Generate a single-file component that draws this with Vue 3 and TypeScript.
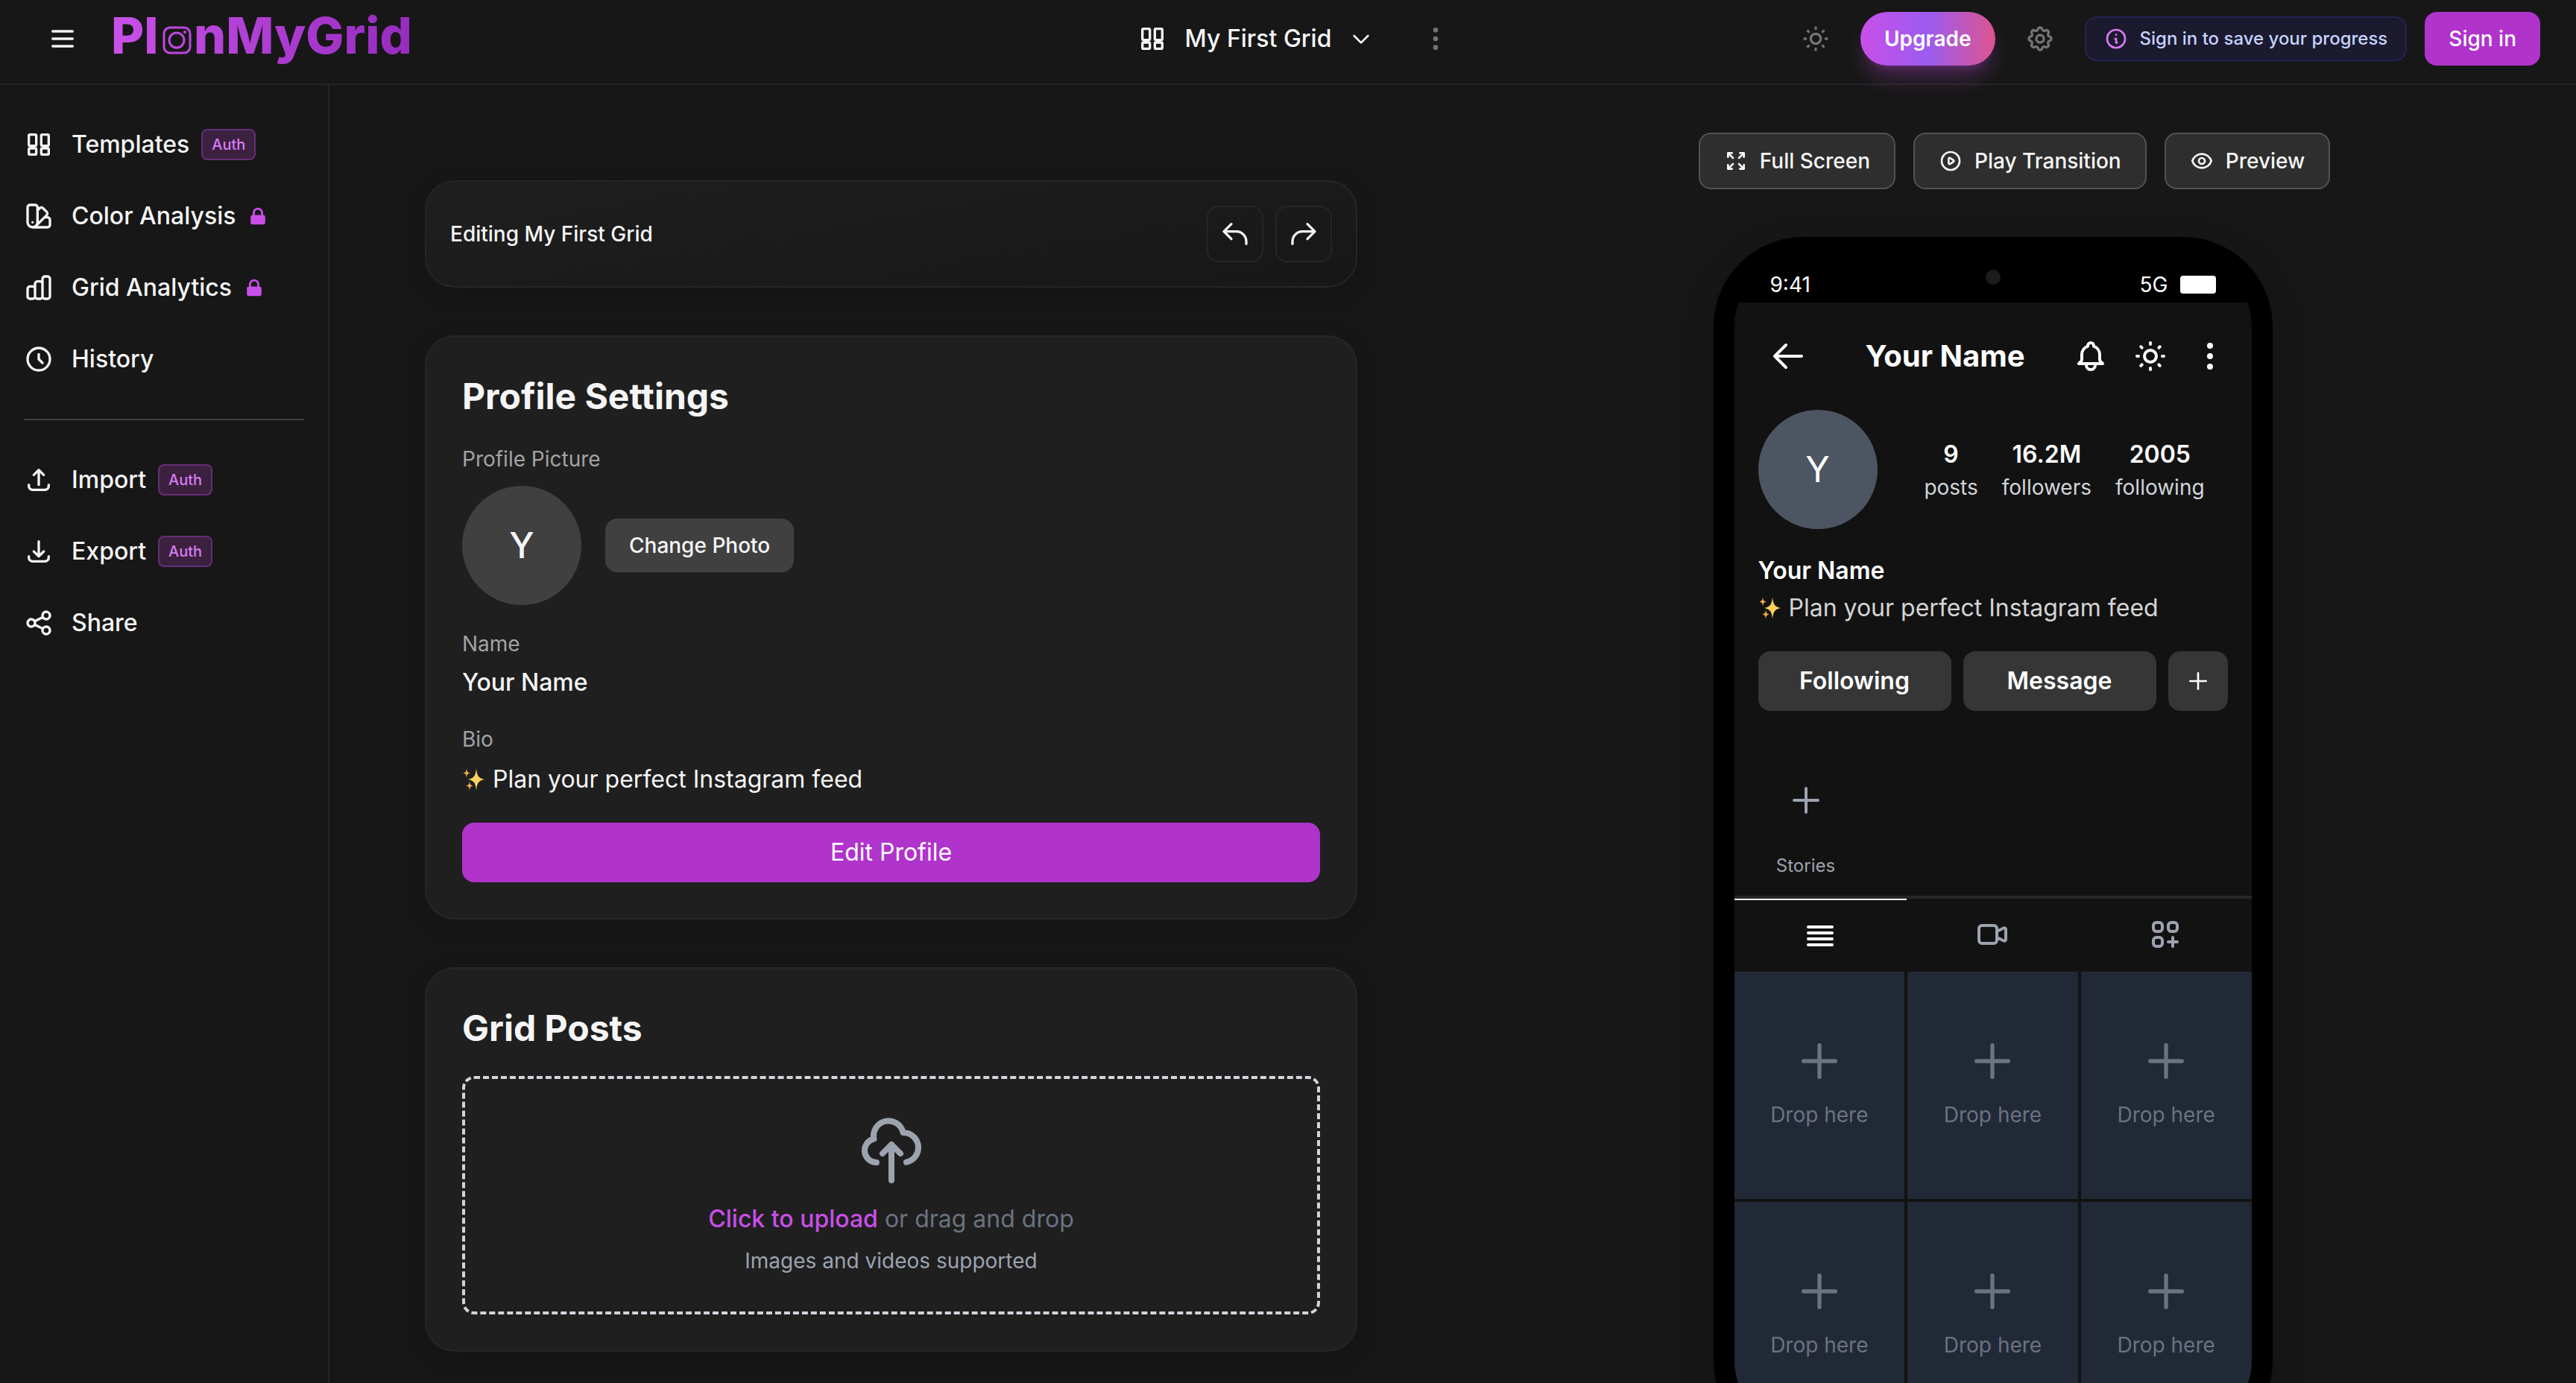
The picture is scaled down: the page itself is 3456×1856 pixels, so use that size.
<script setup lang="ts">
import { h, type FunctionalComponent } from 'vue'

type IconName =
  | 'menu' | 'template' | 'chevron' | 'dots' | 'sun' | 'cog' | 'info' | 'swatch' | 'chart'
  | 'clock' | 'upload' | 'download' | 'share' | 'undo' | 'redo' | 'cloud' | 'expand' | 'play'
  | 'eye' | 'back' | 'bell' | 'plus' | 'list' | 'video' | 'gridAdd'

const paths: Record<IconName, string> = {
  menu: 'M4 6h16M4 12h16M4 18h16',
  template:
    'M4 5a1 1 0 011-1h4a1 1 0 011 1v7a1 1 0 01-1 1H5a1 1 0 01-1-1V5zM14 5a1 1 0 011-1h4a1 1 0 011 1v7a1 1 0 01-1 1h-4a1 1 0 01-1-1V5zM4 16a1 1 0 011-1h4a1 1 0 011 1v3a1 1 0 01-1 1H5a1 1 0 01-1-1v-3zM14 16a1 1 0 011-1h4a1 1 0 011 1v3a1 1 0 01-1 1h-4a1 1 0 01-1-1v-3z',
  chevron: 'M19 9l-7 7-7-7',
  dots: 'M12 5v.01M12 12v.01M12 19v.01M12 6a1 1 0 110-2 1 1 0 010 2zm0 7a1 1 0 110-2 1 1 0 010 2zm0 7a1 1 0 110-2 1 1 0 010 2z',
  sun: 'M12 3v1m0 16v1m9-9h-1M4 12H3m15.364 6.364l-.707-.707M6.343 6.343l-.707-.707m12.728 0l-.707.707M6.343 17.657l-.707.707M16 12a4 4 0 11-8 0 4 4 0 018 0z',
  cog: 'M10.325 4.317c.426-1.756 2.924-1.756 3.35 0a1.724 1.724 0 002.573 1.066c1.543-.94 3.31.826 2.37 2.37a1.724 1.724 0 001.065 2.572c1.756.426 1.756 2.924 0 3.35a1.724 1.724 0 00-1.066 2.573c.94 1.543-.826 3.31-2.37 2.37a1.724 1.724 0 00-2.572 1.065c-.426 1.756-2.924 1.756-3.35 0a1.724 1.724 0 00-2.573-1.066c-1.543.94-3.31-.826-2.37-2.37a1.724 1.724 0 00-1.065-2.572c-1.756-.426-1.756-2.924 0-3.35a1.724 1.724 0 001.066-2.573c-.94-1.543.826-3.31 2.37-2.37.996.608 2.296.07 2.572-1.065zM15 12a3 3 0 11-6 0 3 3 0 016 0z',
  info: 'M13 16h-1v-4h-1m1-4h.01M21 12a9 9 0 11-18 0 9 9 0 0118 0z',
  swatch:
    'M7 21a4 4 0 01-4-4V5a2 2 0 012-2h4a2 2 0 012 2v12a4 4 0 01-4 4zm0 0h12a2 2 0 002-2v-4a2 2 0 00-2-2h-2.343M11 7.343l1.657-1.657a2 2 0 012.828 0l2.829 2.829a2 2 0 010 2.828l-8.486 8.485M7 17h.01',
  chart:
    'M9 19v-6a2 2 0 00-2-2H5a2 2 0 00-2 2v6a2 2 0 002 2h2a2 2 0 002-2zm0 0V9a2 2 0 012-2h2a2 2 0 012 2v10m-6 0a2 2 0 002 2h2a2 2 0 002-2m0 0V5a2 2 0 012-2h2a2 2 0 012 2v14a2 2 0 01-2 2h-2a2 2 0 01-2-2z',
  clock: 'M12 8v4l3 3m6-3a9 9 0 11-18 0 9 9 0 0118 0z',
  upload: 'M4 16v1a3 3 0 003 3h10a3 3 0 003-3v-1m-4-8l-4-4m0 0L8 8m4-4v12',
  download: 'M4 16v1a3 3 0 003 3h10a3 3 0 003-3v-1m-4-4l-4 4m0 0l-4-4m4 4V4',
  share:
    'M8.684 13.342C8.886 12.938 9 12.482 9 12c0-.482-.114-.938-.316-1.342m0 2.684a3 3 0 110-2.684m0 2.684l6.632 3.316m-6.632-6l6.632-3.316m0 0a3 3 0 105.367-2.684 3 3 0 00-5.367 2.684zm0 9.316a3 3 0 105.368 2.684 3 3 0 00-5.368-2.684z',
  undo: 'M3 10h10a8 8 0 018 8v2M3 10l6 6m-6-6l6-6',
  redo: 'M21 10H11a8 8 0 00-8 8v2m18-10l-6 6m6-6l-6-6',
  cloud: 'M7 16a4 4 0 01-.88-7.903A5 5 0 1115.9 6L16 6a5 5 0 011 9.9M15 13l-3-3m0 0l-3 3m3-3v12',
  expand:
    'M4 8V4m0 0h4M4 4l5 5m11-1V4m0 0h-4m4 0l-5 5M4 16v4m0 0h4m-4 0l5-5m11 5l-5-5m5 5v-4m0 4h-4',
  play: 'M14.752 11.168l-3.197-2.132A1 1 0 0010 9.87v4.263a1 1 0 001.555.832l3.197-2.132a1 1 0 000-1.664zM21 12a9 9 0 11-18 0 9 9 0 0118 0z',
  eye: 'M15 12a3 3 0 11-6 0 3 3 0 016 0zM2.458 12C3.732 7.943 7.523 5 12 5c4.478 0 8.268 2.943 9.542 7-1.274 4.057-5.064 7-9.542 7-4.477 0-8.268-2.943-9.542-7z',
  back: 'M10.5 19.5L3 12m0 0l7.5-7.5M3 12h18',
  bell: 'M15 17h5l-1.405-1.405A2.032 2.032 0 0118 14.158V11a6.002 6.002 0 00-4-5.659V5a2 2 0 10-4 0v.341C7.67 6.165 6 8.388 6 11v3.159c0 .538-.214 1.055-.595 1.436L4 17h5m6 0v1a3 3 0 11-6 0v-1m6 0H9',
  plus: 'M12 4v16m8-8H4',
  list: 'M4 6h16M4 10h16M4 14h16M4 18h16',
  video:
    'M15 10l4.553-2.276A1 1 0 0121 8.618v6.764a1 1 0 01-1.447.894L15 14M5 18h8a2 2 0 002-2V8a2 2 0 00-2-2H5a2 2 0 00-2 2v8a2 2 0 002 2z',
  gridAdd:
    'M17 14v6m-3-3h6M6 10h2a2 2 0 002-2V6a2 2 0 00-2-2H6a2 2 0 00-2 2v2a2 2 0 002 2zm10 0h2a2 2 0 002-2V6a2 2 0 00-2-2h-2a2 2 0 00-2 2v2a2 2 0 002 2zM6 20h2a2 2 0 002-2v-2a2 2 0 00-2-2H6a2 2 0 00-2 2v2a2 2 0 002 2z',
}

const Icon: FunctionalComponent<{ name: IconName; size: number }> = (props) =>
  h(
    'svg',
    {
      width: props.size,
      height: props.size,
      viewBox: '0 0 24 24',
      fill: 'none',
      stroke: 'currentColor',
      'stroke-width': 2,
      'stroke-linecap': 'round',
      'stroke-linejoin': 'round',
      'aria-hidden': 'true',
    },
    [h('path', { d: paths[props.name] })],
  )
Icon.props = ['name', 'size']

/* Three four-pointed stars used in front of the bio text. */
const Sparkles: FunctionalComponent = () =>
  h('svg', { width: 32, height: 32, viewBox: '0 0 32 32', fill: '#fbd15c', role: 'img', 'aria-label': 'Sparkles' }, [
    h('path', { d: 'M19 1c1 10 2.500 13 11 15-8.500 2-10 5-11 15-1-10-2.500-13-11-15 8.500-2 10-5 11-15z' }),
    h('path', { d: 'M6 1c.4 4.500 1.200 5.500 4.500 6.500-3.300 1-4.100 2-4.500 6.500-.4-4.500-1.200-5.500-4.500-6.500 3.300-1 4.100-2 4.500-6.500z', fill: '#eeaa4c' }),
    h('path', { d: 'M10 18c.4 4.500 1.200 5.500 4.500 6.500-3.300 1-4.100 2-4.500 6.500-.4-4.500-1.200-5.500-4.500-6.500 3.300-1 4.100-2 4.500-6.500z', fill: '#eeaa4c' }),
  ])

interface NavItem {
  label: string
  icon: IconName
  badge?: 'auth' | 'lock'
}

const navGroups: NavItem[][] = [
  [
    { label: 'Templates', icon: 'template', badge: 'auth' },
    { label: 'Color Analysis', icon: 'swatch', badge: 'lock' },
    { label: 'Grid Analytics', icon: 'chart', badge: 'lock' },
    { label: 'History', icon: 'clock' },
  ],
  [
    { label: 'Import', icon: 'upload', badge: 'auth' },
    { label: 'Export', icon: 'download', badge: 'auth' },
    { label: 'Share', icon: 'share' },
  ],
]

const tools: { label: string; icon: IconName }[] = [
  { label: 'Full Screen', icon: 'expand' },
  { label: 'Play Transition', icon: 'play' },
  { label: 'Preview', icon: 'eye' },
]

const profile = { name: 'Your Name', initial: 'Y', bio: 'Plan your perfect Instagram feed' }

const stats = [
  { value: '9', label: 'posts' },
  { value: '16.2M', label: 'followers' },
  { value: '2005', label: 'following' },
]

const tabs: { label: string; icon: IconName }[] = [
  { label: 'Feed', icon: 'list' },
  { label: 'Reels', icon: 'video' },
  { label: 'Tagged', icon: 'gridAdd' },
]
</script>

<template>
  <div class="app">
    <header class="topbar">
      <div class="topbar-left">
        <button class="icon-btn bright" type="button" aria-label="Toggle menu"><Icon name="menu" :size="40" /></button>
        <a class="logo" href="#" aria-label="PlanMyGrid home">
          <svg width="416" height="96" viewBox="-8 0 416 96">
            <defs>
              <linearGradient id="brand" gradientUnits="userSpaceOnUse" x1="0" y1="0" x2="404" y2="0">
                <stop offset="0" stop-color="#c850e8" />
                <stop offset="1" stop-color="#962bbe" />
              </linearGradient>
            </defs>
            <text class="logo-text" x="-3" y="68" fill="url(#brand)">Pl</text>
            <g fill="none" stroke="url(#brand)" stroke-width="3">
              <rect x="68" y="33" width="35" height="34" rx="8" />
              <circle cx="85" cy="50" r="10" />
            </g>
            <circle cx="96" cy="39" r="2" fill="url(#brand)" />
            <text class="logo-text" x="108" y="68" fill="url(#brand)">nMyGrid</text>
          </svg>
        </a>
      </div>

      <div class="topbar-center">
        <button class="grid-picker" type="button">
          <Icon name="template" :size="40" />
          <span>My First Grid</span>
          <Icon name="chevron" :size="32" />
        </button>
        <button class="icon-btn" type="button" aria-label="Grid options"><Icon name="dots" :size="40" /></button>
      </div>

      <div class="topbar-right">
        <button class="icon-btn" type="button" aria-label="Toggle theme"><Icon name="sun" :size="40" /></button>
        <button class="upgrade" type="button">Upgrade</button>
        <button class="icon-btn" type="button" aria-label="Settings"><Icon name="cog" :size="40" /></button>
        <div class="notice"><Icon name="info" :size="32" /><span>Sign in to save your progress</span></div>
        <button class="primary sign-in" type="button">Sign in</button>
      </div>
    </header>

    <div class="body">
      <aside class="sidebar">
        <nav aria-label="Main">
          <ul v-for="(group, g) in navGroups" :key="g" class="nav-group">
            <li v-for="item in group" :key="item.label">
              <a class="nav-link" href="#">
                <Icon :name="item.icon" :size="40" />
                <span class="nav-label">
                  {{ item.label }}
                  <span v-if="item.badge === 'auth'" class="auth">Auth</span>
                  <svg v-else-if="item.badge === 'lock'" class="lock" width="28" height="28" viewBox="0 0 20 20" aria-hidden="true">
                    <path fill-rule="evenodd" d="M5 9V7a5 5 0 0110 0v2a2 2 0 012 2v5a2 2 0 01-2 2H5a2 2 0 01-2-2v-5a2 2 0 012-2zm8-2v2H7V7a3 3 0 016 0z" />
                  </svg>
                </span>
              </a>
            </li>
          </ul>
        </nav>
      </aside>

      <main class="main">
        <div class="editor">
          <section class="card editing">
            <span>Editing My First Grid</span>
            <div class="history">
              <button type="button" aria-label="Undo"><Icon name="undo" :size="40" /></button>
              <button type="button" aria-label="Redo"><Icon name="redo" :size="40" /></button>
            </div>
          </section>

          <section class="card panel">
            <h2>Profile Settings</h2>
            <div class="fields">
              <div>
                <p class="label">Profile Picture</p>
                <div class="photo-row">
                  <div class="avatar editor-avatar">{{ profile.initial }}</div>
                  <button class="change-photo" type="button">Change Photo</button>
                </div>
              </div>
              <div>
                <p class="label">Name</p>
                <p class="value">{{ profile.name }}</p>
              </div>
              <div>
                <p class="label">Bio</p>
                <p class="bio"><Sparkles />{{ profile.bio }}</p>
              </div>
              <button class="primary edit-profile" type="button">Edit Profile</button>
            </div>
          </section>

          <section class="card panel">
            <h2>Grid Posts</h2>
            <label class="dropzone">
              <input type="file" multiple accept="image/*,video/*" hidden />
              <Icon name="cloud" :size="96" />
              <span class="drop-main"><b>Click to upload</b> or drag and drop</span>
              <span class="drop-sub">Images and videos supported</span>
            </label>
          </section>
        </div>

        <div class="preview">
          <div class="toolbar">
            <button v-for="tool in tools" :key="tool.label" type="button">
              <Icon :name="tool.icon" :size="32" />{{ tool.label }}
            </button>
          </div>

          <div class="phone">
            <span class="camera"></span>
            <div class="screen">
              <div class="status">
                <span>9:41</span>
                <span class="signal">5G<i class="battery"></i></span>
              </div>

              <div class="ig-header">
                <button class="back" type="button" aria-label="Back"><Icon name="back" :size="48" /></button>
                <h3>{{ profile.name }}</h3>
                <div class="ig-actions">
                  <button type="button" aria-label="Notifications"><Icon name="bell" :size="48" /></button>
                  <button type="button" aria-label="Theme"><Icon name="sun" :size="48" /></button>
                  <button type="button" aria-label="More"><Icon name="dots" :size="48" /></button>
                </div>
              </div>

              <div class="ig-profile">
                <div class="ig-top">
                  <div class="avatar ig-avatar">{{ profile.initial }}</div>
                  <div class="stats">
                    <div v-for="stat in stats" :key="stat.label" class="stat">
                      <strong>{{ stat.value }}</strong>
                      <span>{{ stat.label }}</span>
                    </div>
                  </div>
                </div>
                <div class="ig-bio">
                  <strong>{{ profile.name }}</strong>
                  <p class="bio"><Sparkles />{{ profile.bio }}</p>
                </div>
                <div class="ig-buttons">
                  <button type="button">Following</button>
                  <button type="button">Message</button>
                  <button class="square" type="button" aria-label="Add"><Icon name="plus" :size="32" /></button>
                </div>
              </div>

              <div class="stories">
                <button class="story" type="button">
                  <span class="story-ring"><Icon name="plus" :size="48" /></span>
                  Stories
                </button>
              </div>

              <div class="tabs">
                <button
                  v-for="(tab, t) in tabs"
                  :key="tab.label"
                  type="button"
                  :class="{ active: t === 0 }"
                  :aria-label="tab.label"
                >
                  <Icon :name="tab.icon" :size="48" />
                </button>
              </div>

              <div class="posts">
                <div v-for="n in 6" :key="n" class="post">
                  <Icon name="plus" :size="64" />
                  <span>Drop here</span>
                </div>
              </div>
            </div>
          </div>
        </div>
      </main>
    </div>
  </div>
</template>

<style>
body {
  margin: 0;
  background: #171717;
}
</style>

<style scoped>
* {
  box-sizing: border-box;
}

.app {
  display: flex;
  flex-direction: column;
  height: 100vh;
  overflow: hidden;
  background: #171717;
  color: #f5f5f5;
  font-family: Inter, "Noto Sans", sans-serif;
  font-size: 32px;
  line-height: 48px;
}

h2,
h3,
p,
ul {
  margin: 0;
  padding: 0;
}

svg {
  display: block;
  flex: none;
}

button {
  display: flex;
  align-items: center;
  justify-content: center;
  margin: 0;
  padding: 0;
  border: 0;
  background: none;
  color: inherit;
  font: inherit;
  white-space: nowrap;
}

a {
  color: inherit;
  text-decoration: none;
}

/* Top bar */
.topbar {
  display: grid;
  grid-template-columns: 1fr auto 1fr;
  align-items: center;
  flex: none;
  padding: 4px 48px 12px;
  border-bottom: 2px solid #262626;
}

.topbar-left,
.topbar-center,
.topbar-right {
  display: flex;
  align-items: center;
}

.topbar-left {
  gap: 24px;
}

.topbar-center {
  gap: 24px;
  padding-left: 8px;
}

.topbar-right {
  justify-content: flex-end;
  gap: 24px;
}

.icon-btn {
  width: 72px;
  height: 72px;
  color: #737373;
}

.icon-btn.bright {
  color: #f5f5f5;
}

.logo-text {
  font-family: Inter, sans-serif;
  font-size: 68px;
  font-weight: 800;
}

.grid-picker {
  gap: 24px;
  padding: 0 24px;
  font-weight: 500;
}

.upgrade {
  height: 72px;
  padding: 0 32px;
  border-radius: 36px;
  background: linear-gradient(90deg, #c84fe8, #9b5cf0 50%, #dd548f);
  box-shadow: 0 20px 30px -6px rgba(200, 79, 232, 0.3), 0 8px 12px -8px rgba(200, 79, 232, 0.3);
  color: #fff;
  font-size: 28px;
  font-weight: 600;
}

.notice {
  display: flex;
  align-items: center;
  gap: 16px;
  height: 60px;
  padding: 0 24px;
  border: 2px solid #262354;
  border-radius: 16px;
  background: #1b1a2e;
  color: #c7d2fe;
  font-size: 24px;
  font-weight: 500;
  white-space: nowrap;
}

.notice svg {
  color: #da7cf4;
}

.primary {
  border-radius: 16px;
  background: #b033cc;
  color: #fff;
}

.sign-in {
  height: 72px;
  padding: 0 32px;
  font-size: 28px;
  font-weight: 500;
}

/* Sidebar */
.body {
  display: flex;
  flex: 1;
  min-height: 0;
}

.sidebar {
  flex: none;
  width: 442px;
  padding: 40px 32px;
  border-right: 2px solid #262626;
}

.nav-group {
  display: flex;
  flex-direction: column;
  gap: 16px;
  list-style: none;
}

.nav-group + .nav-group {
  margin-top: 40px;
  padding-top: 40px;
  border-top: 2px solid #404040;
}

.nav-link {
  display: flex;
  align-items: center;
  gap: 24px;
  height: 80px;
  font-weight: 500;
}

.nav-label {
  display: flex;
  align-items: center;
  gap: 16px;
}

.auth {
  padding: 3px 12px;
  border: 2px solid #652e77;
  border-radius: 8px;
  background: #3b213f;
  color: #da7cf4;
  font-size: 20px;
  line-height: 32px;
}

.lock {
  fill: #c84fe8;
}

/* Editor column */
.main {
  display: grid;
  grid-template-columns: minmax(0, 1251fr) minmax(0, 1309fr);
  column-gap: 198px;
  align-items: start;
  flex: 1;
  padding: 64px 128px;
  overflow: hidden;
}

.editor {
  display: flex;
  flex-direction: column;
  gap: 64px;
  padding-top: 64px;
}

.card {
  border: 2px solid #262626;
  border-radius: 40px;
  background: #1f1f1f;
  box-shadow: 0 8px 32px rgba(0, 0, 0, 0.15);
}

.editing {
  display: flex;
  align-items: center;
  justify-content: space-between;
  padding: 32px;
  background: linear-gradient(170deg, #1f1f1f, #171717);
  font-size: 28px;
  font-weight: 500;
}

.history {
  display: flex;
  gap: 16px;
}

.history button {
  width: 76px;
  height: 76px;
  border: 2px solid #262626;
  border-radius: 16px;
}

.panel {
  display: flex;
  flex-direction: column;
  gap: 32px;
  padding: 48px;
}

h2 {
  font-size: 48px;
  font-weight: 700;
  line-height: 64px;
}

.fields {
  display: flex;
  flex-direction: column;
  gap: 32px;
}

.label {
  color: #a3a3a3;
  font-size: 28px;
  line-height: 40px;
}

.value {
  margin-top: 8px;
  font-weight: 500;
}

.photo-row {
  display: flex;
  align-items: center;
  gap: 32px;
  margin-top: 16px;
}

.avatar {
  display: flex;
  align-items: center;
  justify-content: center;
  flex: none;
  width: 160px;
  height: 160px;
  border-radius: 50%;
  font-size: 48px;
}

.editor-avatar {
  background: #404040;
  font-weight: 500;
}

.change-photo {
  height: 72px;
  padding: 0 32px;
  border-radius: 16px;
  background: #404040;
  font-size: 28px;
  font-weight: 500;
}

.bio {
  display: flex;
  align-items: center;
  gap: 9px;
  line-height: 52px;
}

.fields .bio {
  margin-top: 8px;
}

.edit-profile {
  height: 80px;
}

.dropzone {
  display: flex;
  flex-direction: column;
  align-items: center;
  padding: 48px;
  border: 4px dashed #d1d5db;
  border-radius: 16px;
  color: #9ca3af;
}

.drop-main {
  margin-top: 16px;
  color: #6b7280;
  line-height: 56px;
}

.drop-main b {
  color: #c84fe8;
  font-weight: 500;
}

.drop-sub {
  margin-top: 8px;
  font-size: 28px;
  line-height: 40px;
}

/* Preview column */
.preview {
  display: flex;
  flex-direction: column;
  align-items: center;
  gap: 64px;
}

.toolbar {
  display: flex;
  gap: 24px;
  padding-left: 58px;
}

.toolbar button {
  gap: 16px;
  height: 76px;
  padding: 0 32px;
  border: 2px solid #525252;
  border-radius: 16px;
  background: #2e2e2e;
  font-size: 28px;
  font-weight: 500;
}

.phone {
  position: relative;
  width: 750px;
  aspect-ratio: 375 / 812;
  padding: 28px;
  border-radius: 120px;
  background: #000;
  box-shadow: 0 16px 48px rgba(0, 0, 0, 0.2);
  color: #fff;
}

.camera {
  position: absolute;
  z-index: 1;
  top: 44px;
  left: calc(50% - 10px);
  width: 20px;
  height: 20px;
  border-radius: 50%;
  background: #1c1c1c;
}

.screen {
  height: 100%;
  border-radius: 92px;
  background: #121212;
  overflow: hidden;
}

.status {
  display: flex;
  justify-content: space-between;
  padding: 16px 48px 4px;
  background: #000;
  font-size: 28px;
  line-height: 40px;
}

.signal {
  display: flex;
  align-items: center;
  gap: 16px;
}

.battery {
  width: 48px;
  height: 24px;
  border-radius: 4px;
  background: #fff;
}

.ig-header {
  display: flex;
  align-items: center;
  padding: 32px;
}

.back {
  width: 80px;
  height: 80px;
}

h3 {
  flex: 1;
  font-size: 40px;
  font-weight: 700;
  line-height: 56px;
  text-align: center;
}

.ig-actions {
  display: flex;
  gap: 32px;
}

.ig-profile {
  display: flex;
  flex-direction: column;
  gap: 32px;
  padding: 0 32px;
}

.ig-top {
  display: flex;
  align-items: center;
  gap: 32px;
}

.ig-avatar {
  background: #4d5562;
}

.stats {
  display: flex;
  flex: 1;
  justify-content: center;
  gap: 32px;
}

.stat {
  display: flex;
  flex-direction: column;
  align-items: center;
}

.stat strong {
  font-weight: 600;
}

.stat span {
  color: #d1d5db;
  font-size: 28px;
  line-height: 40px;
}

.ig-bio strong {
  display: block;
  font-weight: 600;
}

.ig-bio .bio {
  color: #d4d4d4;
}

.ig-buttons {
  display: flex;
  gap: 16px;
}

.ig-buttons button {
  flex: 1;
  height: 80px;
  border-radius: 16px;
  background: #363636;
  font-weight: 600;
}

.ig-buttons .square {
  flex: none;
  width: 80px;
}

.stories {
  display: flex;
  padding: 56px 32px 24px;
}

.story {
  flex-direction: column;
  gap: 8px;
  color: #9ca3af;
  font-size: 24px;
  line-height: 32px;
}

.story-ring {
  display: flex;
  align-items: center;
  justify-content: center;
  width: 128px;
  height: 128px;
  border: 1px solid #151515;
  border-radius: 50%;
}

.tabs {
  display: flex;
  border-top: 4px solid #262626;
}

.tabs button {
  flex: 1;
  align-items: flex-start;
  padding: 24px 0;
  color: #9ca3af;
}

.tabs .active {
  border-top: 2px solid #fff;
  color: #fff;
}

.posts {
  display: grid;
  grid-template-columns: repeat(3, 1fr);
  gap: 4px;
}

.post {
  display: flex;
  flex-direction: column;
  align-items: center;
  justify-content: center;
  gap: 16px;
  aspect-ratio: 3 / 4;
  background: #212936;
  color: #6b7280;
  font-size: 28px;
}
</style>
